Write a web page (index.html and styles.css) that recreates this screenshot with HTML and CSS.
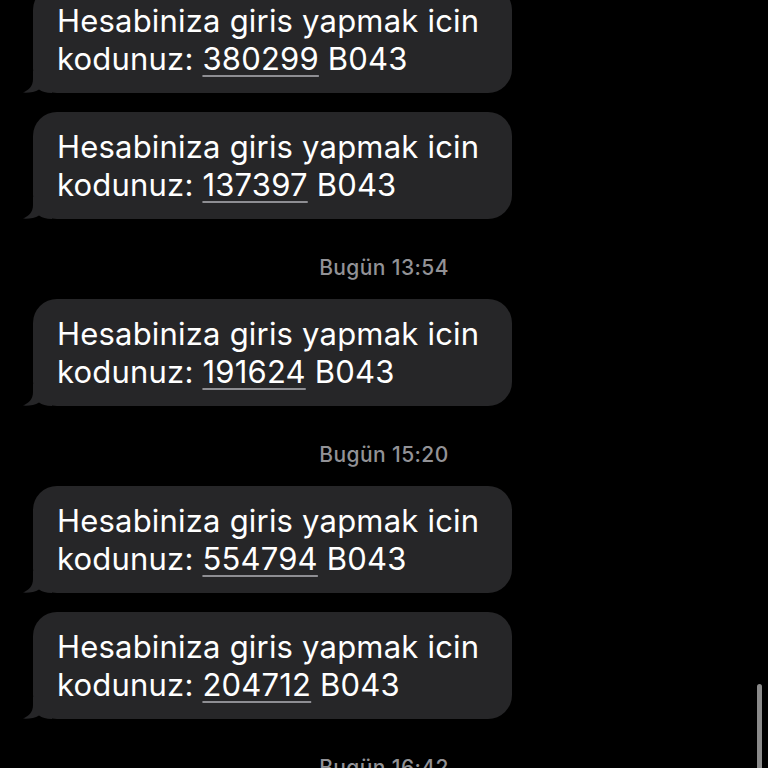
FILE: index.html
```html
<!DOCTYPE html>
<html lang="tr">
<head>
<meta charset="utf-8">
<link rel="stylesheet" href="styles.css">
</head>
<body>
<div class="thread">
  <div class="bubble first">Hesabiniza giris yapmak icin<br>kodunuz: <span class="code">380299</span> B043<svg class="tail" viewBox="0 0 30 22"><path d="M11 0 L11 8 C11 15 7 19 1 21.6 C7 22 13 21 17 18.5 C20 20.8 24 22 30 22 L30 0 Z"/></svg></div>
  <div class="bubble">Hesabiniza giris yapmak icin<br>kodunuz: <span class="code">137397</span> B043<svg class="tail" viewBox="0 0 30 22"><path d="M11 0 L11 8 C11 15 7 19 1 21.6 C7 22 13 21 17 18.5 C20 20.8 24 22 30 22 L30 0 Z"/></svg></div>
  <div class="stamp">Bugün 13:54</div>
  <div class="bubble">Hesabiniza giris yapmak icin<br>kodunuz: <span class="code">191624</span> B043<svg class="tail" viewBox="0 0 30 22"><path d="M11 0 L11 8 C11 15 7 19 1 21.6 C7 22 13 21 17 18.5 C20 20.8 24 22 30 22 L30 0 Z"/></svg></div>
  <div class="stamp">Bugün 15:20</div>
  <div class="bubble">Hesabiniza giris yapmak icin<br>kodunuz: <span class="code">554794</span> B043<svg class="tail" viewBox="0 0 30 22"><path d="M11 0 L11 8 C11 15 7 19 1 21.6 C7 22 13 21 17 18.5 C20 20.8 24 22 30 22 L30 0 Z"/></svg></div>
  <div class="bubble">Hesabiniza giris yapmak icin<br>kodunuz: <span class="code">204712</span> B043<svg class="tail" viewBox="0 0 30 22"><path d="M11 0 L11 8 C11 15 7 19 1 21.6 C7 22 13 21 17 18.5 C20 20.8 24 22 30 22 L30 0 Z"/></svg></div>
  <div class="stamp">Bugün 16:42</div>
</div>
<div class="scrollbar"></div>
</body>
</html>
```
FILE: styles.css
```css
html, body {
  margin: 0;
  padding: 0;
  background: #000;
  height: 768px;
  overflow: hidden;
}
body {
  font-family: Inter, "Liberation Sans", Arial, sans-serif;
  position: relative;
}
.thread {
  display: flex;
  flex-direction: column;
  align-items: flex-start;
  padding-left: 33px;
  margin-top: -14px;
}
.bubble {
  position: relative;
  background: #262628;
  color: #fff;
  font-size: 31px;
  letter-spacing: 0.2px;
  line-height: 38px;
  padding: 16px 33px 15px 24px;
  border-radius: 24px;
  margin-bottom: 19px;
}
.tail {
  position: absolute;
  left: -11px;
  bottom: 0;
  width: 30px;
  height: 22px;
  fill: #262628;
  display: block;
}
.code {
  text-decoration: underline;
  text-decoration-color: #8e8e93;
  text-decoration-thickness: 2px;
  text-underline-offset: 5px;
}
.stamp {
  align-self: center;
  margin-left: -33px;
  color: #929296;
  font-size: 21px;
  letter-spacing: 0.4px;
  font-weight: 500;
  line-height: 22px;
  margin-top: 19px;
  margin-bottom: 20px;
}
.scrollbar {
  position: absolute;
  left: 757px;
  top: 684px;
  width: 5px;
  height: 100px;
  border-radius: 3px;
  background: #8a8a8a;
}
```
